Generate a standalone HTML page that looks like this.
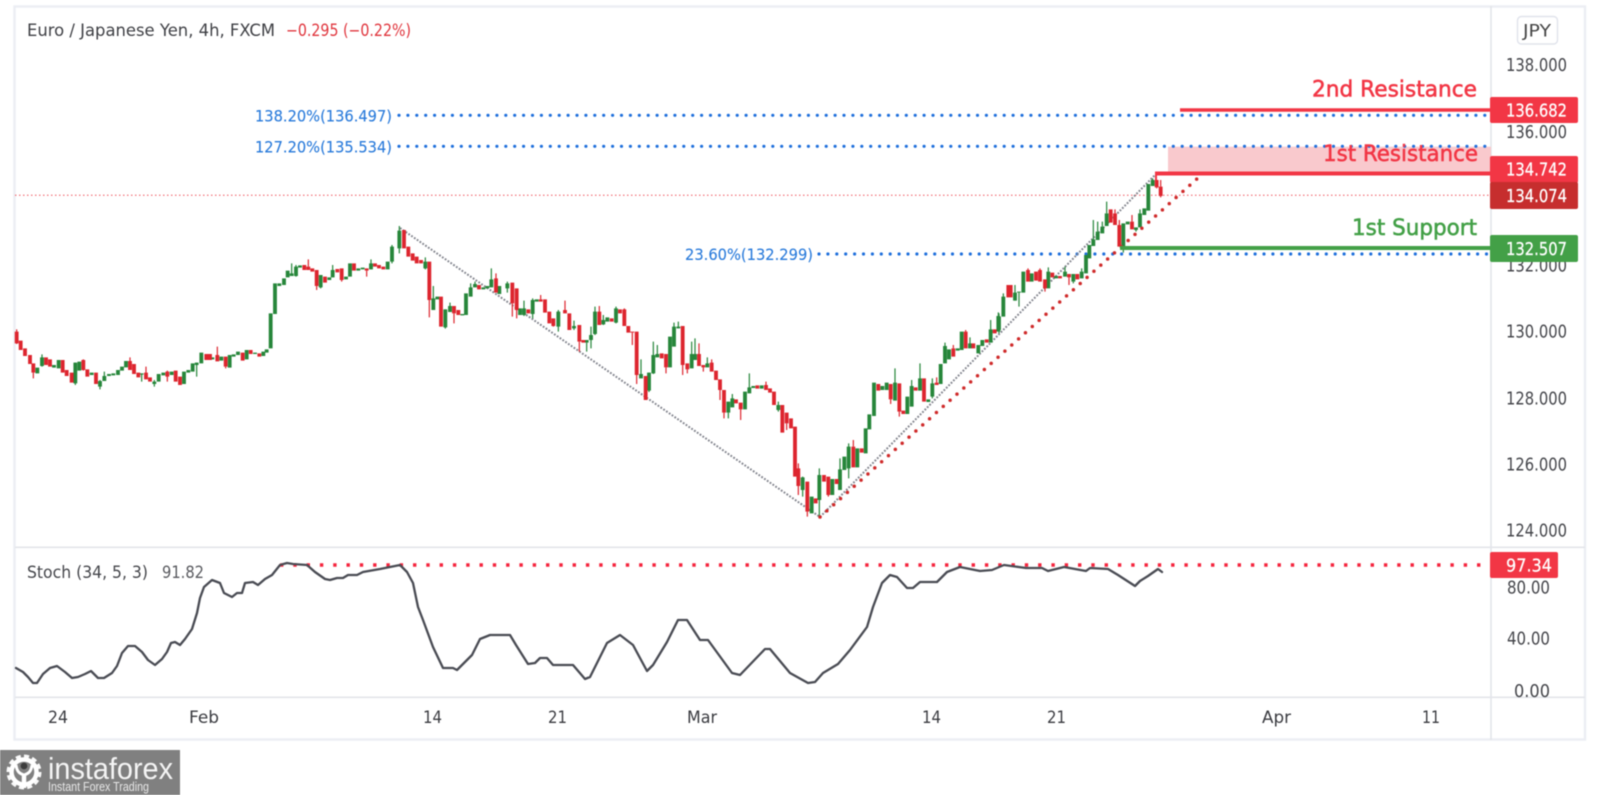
<!DOCTYPE html>
<html><head><meta charset="utf-8"><title>EUR/JPY</title>
<style>
html,body{margin:0;padding:0;background:#fff;width:1600px;height:795px;overflow:hidden}
svg{display:block;filter:blur(.45px)}
text{font-family:"DejaVu Sans","Liberation Sans",sans-serif}
.ax{font-size:17.5px;fill:#45464b;text-anchor:start}
.t{font-size:16.5px;fill:#3a3b40}
.lb{font-size:17.5px;fill:#fff;stroke:#fff;stroke-width:.25}
.bl{font-size:16px;fill:#2a7bdb;stroke:#2a7bdb;stroke-width:.12}
.gb{stroke:#26863a;stroke-width:11.5;fill:none}
.rb{stroke:#dd252e;stroke-width:11.5;fill:none}
.gw{stroke:#26863a;stroke-width:3.6;fill:none}
.rw{stroke:#dd252e;stroke-width:3.6;fill:none}
</style></head><body>
<svg width="1600" height="795" viewBox="0 0 1600 795" xmlns="http://www.w3.org/2000/svg">
<rect width="1600" height="795" fill="#fff"/>
<!-- frame -->
<g fill="none" stroke="#eceef3" stroke-width="2.4">
<rect x="14.5" y="6.5" width="1570.5" height="733"/>
</g>
<g stroke="#e3e5ea" stroke-width="1.6">
<path d="M15 547.3H1585"/><path d="M15 697.3H1585"/><path d="M1491 6V740"/>
</g>

<!-- pink zone -->
<rect x="1168" y="146.7" width="323" height="25.5" fill="#f9c9cd"/>

<!-- price line -->
<path d="M15 195.3H1491" stroke="#f0535c" stroke-width="1" stroke-dasharray="1.5 2.5" fill="none"/>

<!-- fib dots -->
<g stroke="#1e6fdc" stroke-width="3.2" stroke-linecap="round" stroke-dasharray="0 8.9" fill="none">
<path d="M399 115.3H1490"/><path d="M399 146.3H1490"/><path d="M819 254H1490"/>
</g>

<!-- grey zigzag -->
<g stroke="#84868f" stroke-width="2" stroke-dasharray="1.8 1.6" fill="none">
<path d="M400 228L820 517"/><path d="M820 517L1155 175"/>
</g>

<!-- candles -->
<g transform="translate(0,200) scale(.33333)">
<path class="gw" d="M126 463V500M226 488V555M300 540V568M313 515V530M425 520V545M463 540V560M590 488V530M875 190V228M888 195V230M962 225V265M998 195V232M1113 178V208M1198 78V160M1276 172V208M1300 258V300M1336 328V386M1350 308V320M1412 250V265M1425 245V255M1474 205V240M1176 135V190"/>
<path class="rw" d="M50 388V432M100 518V535M250 478V512M390 472V490M438 500V520M502 512V545M652 440V466M677 500V505M950 258V270M925 178V200M1025 240V245M1100 212V230M1288 300V352M1362 340V370M1488 220V238"/>
<path class="gb" d="M112 503V520M126 472V498M162 495V503M176 480V505M226 488V550M238 485V512M275 518V525M300 543V560M313 528V543M327 522V528M340 520V526M354 510V525M366 500V512M378 483V502M425 520V524M463 545V552M476 522V545M490 518V526M515 515V525M552 515V552M565 510V518M578 490V515M590 488V495M604 458V490M637 472V478M664 470V482M689 465V503M701 463V470M714 455V465M740 450V478M765 458V462M790 455V468M800 448V458M812 340V445M825 250V342M838 250V258M852 235V255M863 212V232M875 220V228M888 200V228M900 196V203M962 225V262M988 232V240M998 210V232M1038 230V238M1050 190V230M1075 205V212M1088 203V208M1113 190V208M1163 185V208M1176 140V185M1198 92V145M1276 185V205M1300 295V330M1312 290V298M1336 328V382M1350 318V336M1387 342V346M1398 280V345M1412 262V290M1425 252V262M1450 262V268M1462 258V265M1474 238V262M1498 258V282"/>
<path class="rb" d="M50 395V430M62 422V450M75 445V468M90 465V492M100 490V518M138 472V495M150 478V500M188 480V518M200 510V528M215 518V548M250 480V510M262 508V530M288 518V552M390 483V510M402 492V522M415 518V532M438 518V538M450 532V545M502 515V530M527 512V545M540 530V555M619 462V480M630 462V480M652 465V484M677 470V500M728 458V482M752 450V462M778 460V470M913 195V210M925 200V210M937 205V215M950 210V258M975 230V248M1012 207V217M1025 205V240M1062 190V212M1100 205V212M1125 190V200M1137 195V205M1150 200V208M1212 90V145M1225 140V170M1238 160V182M1250 170V190M1263 180V190M1288 185V300M1323 290V380M1362 318V340M1375 330V345M1437 255V268M1488 235V278"/>
</g>
<g transform="translate(500,280) scale(.33333)">
<path class="gw" d="M22 5V38M72 62V108M98 55V115M175 90V155M222 122V150M260 188V215M273 140V205M285 80V165M310 105V135M348 80V130M423 238V285M447 278V336M460 185V282M472 195V225M522 128V145M535 125V145M575 185V225M585 175V225M622 232V252M685 398V415M697 342V358M748 280V325M835 365V395M908 590V650M958 565V712M1020 535V570M1046 490V595M1185 265V310M1235 300V320M1260 250V297M1297 295V355M1335 188V200M1410 172V192M1472 120V150M1495 97V110"/>
<path class="rw" d="M37 70V110M50 90V115M122 45V58M160 138V140M195 62V92M238 185V215M298 78V97M373 85V90M397 158V195M410 285V312M437 335V360M498 262V280M548 255V285M562 268V280M597 190V222M610 262V275M635 238V250M660 330V360M672 398V415M722 388V420M798 305V316M860 430V450M895 550V645M922 695V710M985 645V650M1060 480V500M1172 358V372M1198 395V410M1310 292V308M1360 195V205M1397 150V155"/>
<path class="gb" d="M22 10V25M60 85V105M72 85V105M98 60V102M110 58V65M175 95V140M222 138V145M260 180V188M273 165V180M285 95V162M310 120V133M322 112V125M348 85V128M423 282V295M447 278V332M460 225V280M472 222V232M510 170V262M522 140V200M535 140V145M575 222V265M585 222V240M622 250V262M685 365V398M697 355V382M735 335V388M748 322V340M760 318V324M785 316V326M835 375V390M908 592V630M935 650V700M958 585V660M997 597V645M1020 568V630M1033 530V570M1046 500V565M1072 505V562M1097 445V520M1108 403V448M1122 308V408M1147 318V330M1160 308V330M1185 308V362M1222 350V402M1235 318V380M1260 295V332M1285 358V366M1297 310V350M1322 252V312M1335 198V250M1347 208V238M1373 205V212M1385 155V210M1410 190V205M1435 195V220M1447 180V198M1472 148V188M1495 108V155"/>
<path class="rb" d="M37 8V70M50 25V90M85 88V100M122 58V65M135 58V98M148 95V130M160 115V138M195 90V100M208 100V150M238 135V185M250 180V188M298 95V135M335 115V125M360 88V100M373 88V138M385 138V158M397 155V158M410 155V285M437 288V360M485 220V235M498 222V262M548 138V255M562 250V268M597 222V258M610 255V262M635 248V275M648 272V300M660 298V330M672 330V398M708 358V370M722 368V388M772 316V326M798 315V330M810 325V338M822 335V375M847 375V458M860 398V430M873 415V445M885 440V590M895 565V618M922 605V695M947 655V670M972 585V605M985 590V645M1010 597V612M1060 500V562M1085 505V518M1135 312V332M1172 312V358M1198 310V395M1210 392V402M1247 322V332M1272 295V365M1310 308V315M1360 205V230M1397 155V205M1420 190V205M1460 178V188M1484 148V158"/>
</g>
<g transform="translate(800,170) scale(.33333)">
<path class="gw" d="M597 430V490M610 370V385M645 345V392M657 368V410M745 292V305M795 290V305M820 335V340M845 295V305M880 150V210M893 155V185M907 155V170M920 95V130M970 232V248M1008 180V185M1020 118V130M1058 25V30"/>
<path class="rw" d="M684 295V300M720 295V300M735 355V365M807 322V345M945 118V130M958 150V165M996 135V155M1070 52V55M1082 30V50M1082 78V82"/>
<path class="gb" d="M597 440V480M610 380V440M645 368V392M657 365V368M670 305V368M695 310V335M745 305V355M768 318V325M795 305V320M820 312V335M845 305V325M858 255V310M868 225V265M880 208V228M893 185V210M907 170V190M920 130V168M970 160V232M983 155V163M1008 172V180M1020 130V172M1033 115V135M1045 42V122M1058 30V48"/>
<path class="rb" d="M584 482V490M625 345V382M632 345V382M684 300V335M708 305V332M720 300V335M735 328V355M757 308V322M780 318V325M807 312V322M832 312V328M932 118V158M945 130V165M958 165V230M996 155V178M1070 30V52M1082 50V78"/>
</g>

<!-- red trendline dots -->
<path d="M820 517L1199 177" stroke="#cf2a2a" stroke-width="3.5" stroke-linecap="round" stroke-dasharray="0 9.2" fill="none"/>

<!-- S/R lines -->
<path d="M1180 110H1491" stroke="#f23645" stroke-width="3.4" fill="none"/>
<path d="M1155 173.5H1491" stroke="#f23645" stroke-width="4" fill="none"/>
<path d="M1156 172V180" stroke="#f23645" stroke-width="2" fill="none"/>
<path d="M1120 248H1491" stroke="#43a047" stroke-width="4" fill="none"/>

<!-- annotations -->
<g font-size="22.5">
<text x="1312" y="96.5" fill="#f23645" stroke="#f23645" stroke-width=".55" textLength="165" lengthAdjust="spacingAndGlyphs">2nd Resistance</text>
<text x="1323" y="161" fill="#f23645" stroke="#f23645" stroke-width=".55" textLength="155" lengthAdjust="spacingAndGlyphs">1st Resistance</text>
<text x="1352" y="235" fill="#43a047" stroke="#43a047" stroke-width=".55" textLength="125" lengthAdjust="spacingAndGlyphs">1st Support</text>
</g>
<text class="bl" x="255" y="121.5" textLength="137" lengthAdjust="spacingAndGlyphs">138.20%(136.497)</text>
<text class="bl" x="255" y="152.5" textLength="137" lengthAdjust="spacingAndGlyphs">127.20%(135.534)</text>
<text class="bl" x="685" y="260" textLength="128" lengthAdjust="spacingAndGlyphs">23.60%(132.299)</text>

<!-- title -->
<text x="27" y="36" font-size="16.5" fill="#3f4045" textLength="248" lengthAdjust="spacingAndGlyphs">Euro / Japanese Yen, 4h, FXCM</text>
<text x="286" y="36" font-size="16.5" fill="#e0353d" textLength="125" lengthAdjust="spacingAndGlyphs">−0.295 (−0.22%)</text>

<!-- JPY -->
<rect x="1517.5" y="16.5" width="40" height="27.5" rx="4" fill="#fff" stroke="#e0e3eb" stroke-width="1.4"/>
<text x="1523" y="36.5" font-size="17" fill="#444" textLength="28" lengthAdjust="spacingAndGlyphs">JPY</text>

<!-- price axis -->
<g>
<text class="ax" x="1506" y="71" textLength="61" lengthAdjust="spacingAndGlyphs">138.000</text>
<text class="ax" x="1506" y="138" textLength="61" lengthAdjust="spacingAndGlyphs">136.000</text>
<text class="ax" x="1506" y="271.5" textLength="61" lengthAdjust="spacingAndGlyphs">132.000</text>
<text class="ax" x="1506" y="337.5" textLength="61" lengthAdjust="spacingAndGlyphs">130.000</text>
<text class="ax" x="1506" y="404.5" textLength="61" lengthAdjust="spacingAndGlyphs">128.000</text>
<text class="ax" x="1506" y="470.5" textLength="61" lengthAdjust="spacingAndGlyphs">126.000</text>
<text class="ax" x="1506" y="536.5" textLength="61" lengthAdjust="spacingAndGlyphs">124.000</text>
</g>
<rect x="1490" y="97" width="88" height="26" rx="2" fill="#f23645"/>
<rect x="1490" y="156" width="88" height="27" rx="2" fill="#f23645"/>
<rect x="1490" y="182" width="88" height="27" rx="2" fill="#c62e2e"/>
<rect x="1490" y="235" width="88" height="27" rx="2" fill="#43a047"/>
<text class="lb" x="1506" y="116.5" textLength="61" lengthAdjust="spacingAndGlyphs">136.682</text>
<text class="lb" x="1506" y="175.5" textLength="61" lengthAdjust="spacingAndGlyphs">134.742</text>
<text class="lb" x="1506" y="202" textLength="61" lengthAdjust="spacingAndGlyphs">134.074</text>
<text class="lb" x="1506" y="255" textLength="61" lengthAdjust="spacingAndGlyphs">132.507</text>

<!-- stoch -->
<path d="M280 565H1491" stroke="#f5243d" stroke-width="3.4" stroke-dasharray="3.4 9.9" fill="none"/>
<polyline fill="none" stroke="#4a4c54" stroke-width="2.3" stroke-linejoin="round" stroke-linecap="round" points="16,668 23,672 28,677 33,683 37,683 43,674 50,668 57,666 65,672 72,678 78,677 85,674 91,671 98,678 104,678 112,673 117,666 122,653 128,646 135,646 142,652 148,660 155,665 162,659 167,652 171,643 175,642 180,645 185,639 192,629 197,613 200,598 204,587 212,580 220,583 224,593 232,597 237,593 242,593 245,583 253,582 258,585 265,579 272,575 280,565 287,563 293,564 307,565 315,572 325,579 330,580 337,578 343,578 348,575 357,575 363,572 380,569 385,568 400,565 407,572 413,583 418,607 423,620 433,647 443,668 453,668 457,670 472,655 480,639 490,635 510,635 516,645 528,664 535,663 540,658 547,658 553,665 573,665 585,679 590,677 607,643 620,635 633,645 647,671 653,665 667,642 678,620 687,620 700,640 708,640 732,673 740,675 765,649 770,649 790,673 808,683 815,682 823,673 838,664 850,650 867,627 873,607 882,583 890,575 897,577 907,588 913,588 920,582 937,582 947,572 960,567 980,571 992,570 1004,565 1026,568 1042,568 1048,571 1064,567 1086,571 1090,568 1108,569 1118,575 1135,586 1140,581 1148,576 1158,569 1162,572"/>
<text x="27" y="578" font-size="16.5" fill="#45464b" textLength="121" lengthAdjust="spacingAndGlyphs">Stoch (34, 5, 3)</text>
<text x="162" y="578" font-size="16.5" fill="#5a5b60" textLength="42" lengthAdjust="spacingAndGlyphs">91.82</text>
<text class="ax" x="1507" y="593.5" textLength="43" lengthAdjust="spacingAndGlyphs">80.00</text>
<text class="ax" x="1507" y="644.5" textLength="43" lengthAdjust="spacingAndGlyphs">40.00</text>
<text class="ax" x="1514" y="697" textLength="36" lengthAdjust="spacingAndGlyphs">0.00</text>
<rect x="1490" y="552" width="68" height="26" rx="2" fill="#f23645"/>
<text class="lb" x="1506" y="571.5" textLength="46" lengthAdjust="spacingAndGlyphs">97.34</text>

<!-- time axis -->
<text class="t" x="48" y="723" textLength="20" lengthAdjust="spacingAndGlyphs">24</text>
<text class="t" x="189" y="723" textLength="30" lengthAdjust="spacingAndGlyphs">Feb</text>
<text class="t" x="423" y="723" textLength="19" lengthAdjust="spacingAndGlyphs">14</text>
<text class="t" x="548" y="723" textLength="19" lengthAdjust="spacingAndGlyphs">21</text>
<text class="t" x="687" y="723" textLength="30" lengthAdjust="spacingAndGlyphs">Mar</text>
<text class="t" x="922" y="723" textLength="19" lengthAdjust="spacingAndGlyphs">14</text>
<text class="t" x="1047" y="723" textLength="19" lengthAdjust="spacingAndGlyphs">21</text>
<text class="t" x="1262" y="723" textLength="29" lengthAdjust="spacingAndGlyphs">Apr</text>
<text class="t" x="1422" y="723" textLength="18" lengthAdjust="spacingAndGlyphs">11</text>

<!-- logo -->
<rect x="0" y="750" width="180" height="45" fill="#808080"/>
<g fill="none" stroke="#fff">
<circle cx="24" cy="772" r="15.5" stroke-width="4" stroke-dasharray="5 3.1" opacity=".95"/>
<circle cx="24" cy="772" r="12.5" stroke-width="4.5"/>
</g>
<circle cx="24" cy="772" r="10" fill="#808080"/>
<circle cx="24" cy="766" r="3.4" fill="#3c3c3c"/>
<path d="M16 765C17 773 21 774 24 775C27 774 31 773 32 765" fill="none" stroke="#fff" stroke-width="3"/>
<path d="M24 774V788" stroke="#fff" stroke-width="4.5" fill="none"/>
<text x="48" y="779" font-size="31" fill="#f4f4f4" textLength="125" lengthAdjust="spacingAndGlyphs" style="font-family:'Liberation Sans',sans-serif;font-weight:400">instaforex</text>
<text x="48" y="791" font-size="12.5" fill="#e6e6e6" textLength="101" lengthAdjust="spacingAndGlyphs" style="font-family:'Liberation Sans',sans-serif">Instant Forex Trading</text>
</svg>
</body></html>
